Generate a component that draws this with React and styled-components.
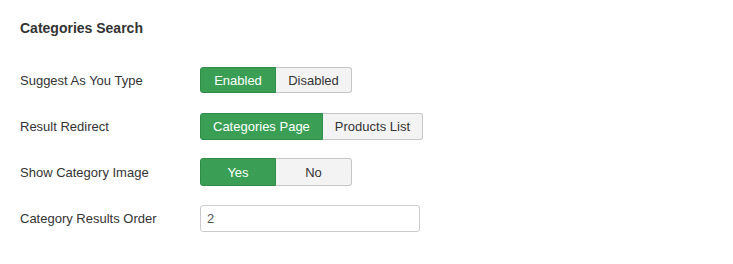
import styled, { createGlobalStyle } from 'styled-components';

const GlobalStyle = createGlobalStyle`
  body {
    margin: 0;
    background: #fff;
    font-family: "Liberation Sans", Arial, sans-serif;
    color: #333;
  }
`;

const Panel = styled.section`
  padding: 19px 20px 0;
`;

const Heading = styled.h3`
  margin: 0 0 29px;
  font-size: 14px;
  font-weight: bold;
  color: #333;
  line-height: 18px;
`;

const Row = styled.div`
  display: flex;
  align-items: center;
  height: 28px;
  margin-bottom: 18px;
`;

const Label = styled.label`
  width: 180px;
  font-size: 13px;
  color: #333;
`;

const Group = styled.div`
  display: flex;
`;

const Option = styled.button`
  box-sizing: border-box;
  height: ${(p) => p.$h || 26}px;
  min-width: 76px;
  padding: 0 12px;
  font-family: inherit;
  font-size: 13px;
  border: 1px solid ${(p) => (p.$active ? '#2f8c47' : '#c6c6c6')};
  background: ${(p) => (p.$active ? '#3a9f55' : '#f3f3f3')};
  color: ${(p) => (p.$active ? '#fff' : '#333')};
  cursor: pointer;

  &:first-child {
    border-radius: 3px 0 0 3px;
  }
  &:last-child {
    border-radius: 0 3px 3px 0;
    border-left: 0;
  }
`;

const Input = styled.input`
  box-sizing: border-box;
  width: 220px;
  height: 27px;
  padding: 0 6px;
  font-family: inherit;
  font-size: 13px;
  color: #555;
  border: 1px solid #ccc;
  border-radius: 3px;
  outline: none;
`;

const toggles = [
  { label: 'Suggest As You Type', options: ['Enabled', 'Disabled'], h: 26 },
  { label: 'Result Redirect', options: ['Categories Page', 'Products List'], h: 27 },
  { label: 'Show Category Image', options: ['Yes', 'No'], h: 28 },
];

export default function App() {
  return (
    <>
      <GlobalStyle />
      <Panel>
        <Heading>Categories Search</Heading>
        {toggles.map((t) => (
          <Row key={t.label}>
            <Label>{t.label}</Label>
            <Group>
              {t.options.map((o, i) => (
                <Option key={o} $active={i === 0} $h={t.h}>
                  {o}
                </Option>
              ))}
            </Group>
          </Row>
        ))}
        <Row>
          <Label>Category Results Order</Label>
          <Input defaultValue="2" />
        </Row>
      </Panel>
    </>
  );
}
